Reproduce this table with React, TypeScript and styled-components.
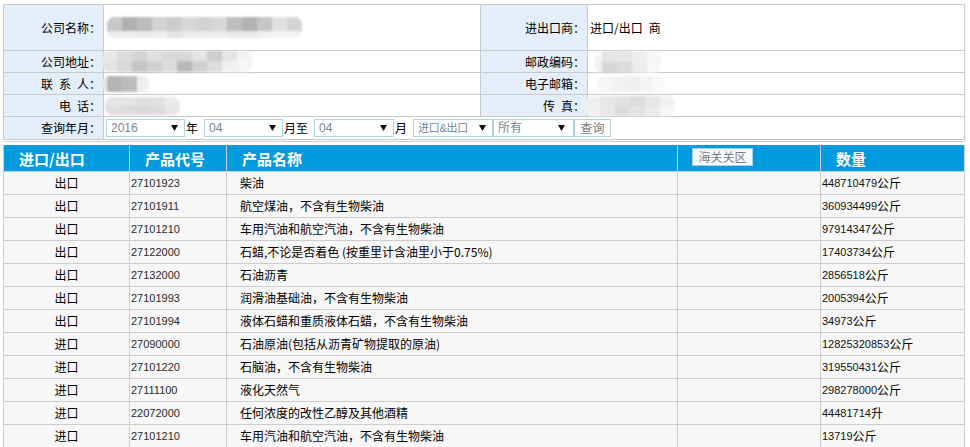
import React from "react";
import styled, { createGlobalStyle } from "styled-components";

const GlobalStyle = createGlobalStyle`
  html, body { margin: 0; padding: 0; background: #fff; overflow: hidden; }
  body {
    font-family: "Noto Sans CJK SC", "Liberation Sans", sans-serif;
    font-size: 12px;
    color: #000;
  }
  * { box-sizing: border-box; }
`;

const Page = styled.div`
  padding: 4px 0 0 3px;
  width: 970px;
`;

/* ---------- company info block ---------- */

const InfoGrid = styled.div`
  display: grid;
  width: 962px;
  grid-template-columns: 99px 376px 106px 376px;
  grid-template-rows: 45px 21px 21px 21px 22px;
  gap: 1px;
  padding: 1px;
  background: #c8c8c8;
`;

const Label = styled.div`
  background: #e4eefa;
  display: flex;
  align-items: center;
  justify-content: flex-end;
  padding-right: 2px;
  white-space: nowrap;
  line-height: 1;
`;

const Value = styled.div<{ $pad?: number }>`
  background: #fff;
  display: flex;
  align-items: center;
  padding-left: ${(p) => p.$pad ?? 2}px;
  white-space: nowrap;
  line-height: 1;
`;

const QueryCell = styled(Value)`
  grid-column: 2 / 5;
`;

/* blurred, pixelated private data */
const Mosaic = styled.div<{ $cols: string; $rows: string; $shift: number }>`
  display: grid;
  grid-template-columns: ${(p) => p.$cols};
  grid-template-rows: ${(p) => p.$rows};
  margin-left: ${(p) => p.$shift}px;
  border-radius: 7px;
  overflow: hidden;
  filter: blur(1.3px);
`;

const Tile = styled.span<{ $g: number }>`
  background: rgb(${(p) => p.$g}, ${(p) => p.$g}, ${(p) => p.$g});
`;

type Blur = { cols: string; rows: string; shift: number; tiles: number[] };

const Blurred: React.FC<{ b: Blur }> = ({ b }) => (
  <Mosaic $cols={b.cols} $rows={b.rows} $shift={b.shift}>
    {b.tiles.map((g, i) => (
      <Tile key={i} $g={g} />
    ))}
  </Mosaic>
);

const rep = (n: number, w: number) => `repeat(${n}, ${w}px)`;

const blurName: Blur = {
  cols: rep(13, 15),
  rows: "14px 7px",
  shift: 1,
  tiles: [
    0xc8, 0xb0, 0xbc, 0xd4, 0xcc, 0xd8, 0xd2, 0xd6, 0xbe, 0xb2, 0xc6, 0xe0, 0xd4,
    0xec, 0xee, 0xea, 0xee, 0xe4, 0xea, 0xec, 0xee, 0xe8, 0xe8, 0xf0, 0xf4, 0xf4,
  ],
};
const blurAddr: Blur = {
  cols: rep(10, 15),
  rows: "10px 11px",
  shift: -4,
  tiles: [
    0xe8, 0xdc, 0xd4, 0xe0, 0xd8, 0xd8, 0xe4, 0xcc, 0xe4, 0xf2,
    0xe4, 0xd8, 0xc4, 0xd0, 0xdc, 0xb8, 0xd0, 0xdc, 0xf0, 0xf6,
  ],
};
const blurContact: Blur = {
  cols: "5px 15px 15px 12px",
  rows: "16px",
  shift: -4,
  tiles: [0xe8, 0xb4, 0xbc, 0xee],
};
const blurPhone: Blur = {
  cols: rep(5, 15),
  rows: "9px 9px",
  shift: -1,
  tiles: [0xe6, 0xe4, 0xe0, 0xe2, 0xea, 0xe0, 0xdc, 0xd8, 0xdc, 0xe6],
};
const blurPost: Blur = {
  cols: "7px 15px 15px 15px 14px",
  rows: "11px 11px",
  shift: 5,
  tiles: [0xf4, 0xe4, 0xe6, 0xee, 0xf6, 0xf0, 0xd6, 0xdc, 0xec, 0xf8],
};
const blurMail: Blur = {
  cols: rep(5, 14),
  rows: "16px",
  shift: 7,
  tiles: [0xf6, 0xf2, 0xf0, 0xf4, 0xfa],
};
const blurFax: Blur = {
  cols: rep(6, 15),
  rows: "10px 10px",
  shift: -5,
  tiles: [
    0xee, 0xe6, 0xe2, 0xdc, 0xe6, 0xf2,
    0xf0, 0xe8, 0xdc, 0xe4, 0xea, 0xf6,
  ],
};

/* ---------- query controls ---------- */

const SelectBox = styled.div<{ $w: number; $pr?: number }>`
  width: ${(p) => p.$w}px;
  height: 18px;
  border: 1px solid #a9d7e3;
  background: #fff;
  display: flex;
  align-items: center;
  justify-content: space-between;
  padding: 0 ${(p) => p.$pr ?? 6}px 0 4px;
  color: #73859b;
  font-family: "Liberation Sans", "Noto Sans CJK SC", sans-serif;
  font-size: 12px;
  flex: none;
`;

const SelectText = styled.span<{ $size?: number }>`
  display: block;
  white-space: nowrap;
  font-size: ${(p) => p.$size ?? 12}px;
  letter-spacing: ${(p) => (p.$size && p.$size < 12 ? "-0.3px" : "0")};
  font-family: "Liberation Sans", "Noto Sans CJK SC", sans-serif;
`;

const Word = styled.span`
  margin: 0 6px 0 1px;
  line-height: 1;
`;

const QueryButton = styled.div`
  width: 37px;
  height: 18px;
  border: 1px solid #a9d7e3;
  background: #fff;
  color: #7a7a7a;
  display: flex;
  align-items: center;
  justify-content: center;
  flex: none;
`;

const Arrow = () => (
  <svg width="7" height="6" viewBox="0 0 7 6">
    <polygon points="0,0 7,0 3.5,6" fill="#111" />
  </svg>
);

const Select: React.FC<{ w: number; text: string; size?: number; pr?: number }> = ({
  w,
  text,
  size,
  pr,
}) => (
  <SelectBox $w={w} $pr={pr}>
    <SelectText $size={size}>{text}</SelectText>
    <Arrow />
  </SelectBox>
);

/* ---------- data table ---------- */

const DataSection = styled.div`
  margin-top: 1px;
  border-top: 1px solid #cfcfcf;
  padding-top: 3px;
  width: 962px;
`;

const DataGrid = styled.div`
  display: grid;
  width: 962px;
  grid-template-columns: 125px 96px 450px 142px 143px;
  grid-template-rows: 26px;
  grid-auto-rows: 22px;
  gap: 1px;
  padding: 0 1px 1px;
  background: #cdcdcd;
`;

const HeadCell = styled.div`
  background: #009ade;
  color: #fff;
  font-weight: bold;
  font-size: 15px;
  display: flex;
  align-items: center;
  padding-left: 15px;
  white-space: nowrap;
  line-height: 1;
`;

const HeadBtnCell = styled(HeadCell)`
  align-items: flex-start;
  padding-left: 14px;
  padding-top: 3px;
`;

const CustomsButton = styled.div`
  width: 61px;
  height: 18px;
  background: #f7fbfe;
  border: 1px solid #a4d3ea;
  color: #7b7b7b;
  font-weight: normal;
  font-size: 12px;
  display: flex;
  align-items: center;
  justify-content: center;
`;

const Cell = styled.div<{ $center?: boolean; $pad?: number }>`
  background: #f7f7f7;
  display: flex;
  align-items: center;
  justify-content: ${(p) => (p.$center ? "center" : "flex-start")};
  padding-left: ${(p) => p.$pad ?? 0}px;
  white-space: nowrap;
  overflow: hidden;
  line-height: 1;
`;

const Code = styled.span`
  font-family: "Liberation Sans", sans-serif;
  font-size: 11px;
  color: #2a2a2a;
  padding-left: 1px;
`;

const Num = styled.span`
  font-family: "Liberation Sans", sans-serif;
  font-size: 11px;
  color: #111;
  padding-left: 1px;
`;

const Unit = styled.span`
  font-size: 12px;
`;

type Row = [string, string, string, string, string];

const rows: Row[] = [
  ["出口", "27101923", "柴油", "448710479", "公斤"],
  ["出口", "27101911", "航空煤油，不含有生物柴油", "360934499", "公斤"],
  ["出口", "27101210", "车用汽油和航空汽油，不含有生物柴油", "97914347", "公斤"],
  ["出口", "27122000", "石蜡,不论是否着色 (按重里计含油里小于0.75%)", "17403734", "公斤"],
  ["出口", "27132000", "石油沥青", "2856518", "公斤"],
  ["出口", "27101993", "润滑油基础油，不含有生物柴油", "2005394", "公斤"],
  ["出口", "27101994", "液体石蜡和重质液体石蜡，不含有生物柴油", "34973", "公斤"],
  ["进口", "27090000", "石油原油(包括从沥青矿物提取的原油)", "12825320853", "公斤"],
  ["进口", "27101220", "石脑油，不含有生物柴油", "319550431", "公斤"],
  ["进口", "27111100", "液化天然气", "298278000", "公斤"],
  ["进口", "22072000", "任何浓度的改性乙醇及其他酒精", "44481714", "升"],
  ["进口", "27101210", "车用汽油和航空汽油，不含有生物柴油", "13719", "公斤"],
];

export default function App() {
  return (
    <>
      <GlobalStyle />
      <Page>
        <InfoGrid>
          <Label>公司名称：</Label>
          <Value>
            <Blurred b={blurName} />
          </Value>
          <Label>进出口商：</Label>
          <Value>{"进口/出口\u2002商"}</Value>

          <Label>公司地址：</Label>
          <Value>
            <Blurred b={blurAddr} />
          </Value>
          <Label>邮政编码：</Label>
          <Value>
            <Blurred b={blurPost} />
          </Value>

          <Label>{"联\u2002系\u2002人："}</Label>
          <Value>
            <Blurred b={blurContact} />
          </Value>
          <Label>电子邮箱：</Label>
          <Value>
            <Blurred b={blurMail} />
          </Value>

          <Label>{"电\u2002话："}</Label>
          <Value>
            <Blurred b={blurPhone} />
          </Value>
          <Label>{"传\u2002真："}</Label>
          <Value>
            <Blurred b={blurFax} />
          </Value>

          <Label>查询年月：</Label>
          <QueryCell>
            <Select w={79} text="2016" />
            <Word>年</Word>
            <Select w={79} text="04" />
            <Word>月至</Word>
            <Select w={80} text="04" />
            <Word>月</Word>
            <Select w={80} text="进口&出口" size={11} />
            <Select w={81} text="所有" pr={8} />
            <QueryButton>查询</QueryButton>
          </QueryCell>
        </InfoGrid>

        <DataSection>
          <DataGrid>
            <HeadCell>进口/出口</HeadCell>
            <HeadCell>产品代号</HeadCell>
            <HeadCell>产品名称</HeadCell>
            <HeadBtnCell>
              <CustomsButton>海关关区</CustomsButton>
            </HeadBtnCell>
            <HeadCell>数量</HeadCell>

            {rows.map((r, i) => (
              <React.Fragment key={i}>
                <Cell $center>{r[0]}</Cell>
                <Cell>
                  <Code>{r[1]}</Code>
                </Cell>
                <Cell $pad={13}>{r[2]}</Cell>
                <Cell />
                <Cell>
                  <Num>{r[3]}</Num>
                  <Unit>{r[4]}</Unit>
                </Cell>
              </React.Fragment>
            ))}
          </DataGrid>
        </DataSection>
      </Page>
    </>
  );
}
